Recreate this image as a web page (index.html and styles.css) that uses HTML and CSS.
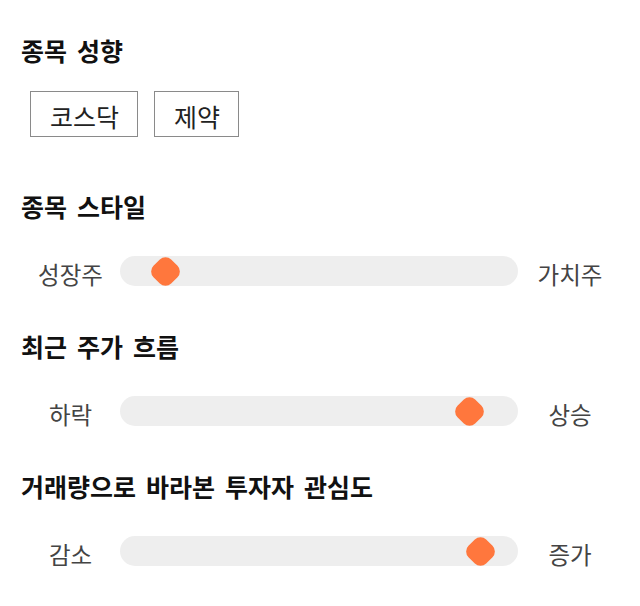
FILE: index.html
```html
<!DOCTYPE html>
<html lang="ko">
<head>
<meta charset="utf-8">
<link rel="stylesheet" href="styles.css">
</head>
<body>
<div class="page">
  <section class="section first">
    <h2 class="title">종목 성향</h2>
    <div class="tags">
      <span class="tag">코스닥</span>
      <span class="tag">제약</span>
    </div>
  </section>
  <section class="section after-tags">
    <h2 class="title">종목 스타일</h2>
    <div class="row">
      <span class="label">성장주</span>
      <div class="track"><span class="thumb" style="left: 45px"></span></div>
      <span class="label">가치주</span>
    </div>
  </section>
  <section class="section">
    <h2 class="title">최근 주가 흐름</h2>
    <div class="row">
      <span class="label">하락</span>
      <div class="track"><span class="thumb" style="left: 349px"></span></div>
      <span class="label">상승</span>
    </div>
  </section>
  <section class="section">
    <h2 class="title">거래량으로 바라본 투자자 관심도</h2>
    <div class="row">
      <span class="label">감소</span>
      <div class="track"><span class="thumb" style="left: 360px"></span></div>
      <span class="label">증가</span>
    </div>
  </section>
</div>
</body>
</html>
```
FILE: styles.css
```css
html, body {
  margin: 0;
  padding: 0;
  background: #ffffff;
}
body {
  font-family: "Noto Sans CJK KR", "Noto Sans", sans-serif;
  color: #111;
}
.page {
  padding: 33px 21px 20px 21px;
}
.section {
  margin-top: 40px;
}
.section.first {
  margin-top: 0;
}
.section.after-tags {
  margin-top: 52px;
}
.title {
  margin: 0;
  font-size: 25px;
  font-weight: 700;
  line-height: 34px;
  word-spacing: 3px;
  color: #111;
}
.tags {
  display: flex;
  gap: 16px;
  margin: 24px 0 0 9px;
}
.tag {
  box-sizing: border-box;
  height: 46px;
  display: flex;
  align-items: center;
  padding: 4px 18px 0 19px;
  border: 1px solid #8a8a8a;
  font-size: 25px;
  line-height: 1;
  color: #222;
}
.row {
  display: grid;
  grid-template-columns: 99px 398px 104px;
  align-items: center;
  margin-top: 30px;
}
.label {
  text-align: center;
  font-size: 23.5px;
  line-height: 30px;
  color: #444;
  padding-top: 6px;
}
.track {
  position: relative;
  height: 30px;
  background: #eeeeee;
  border-radius: 15px;
}
.thumb {
  position: absolute;
  top: 50%;
  width: 25px;
  height: 25px;
  margin-left: -12.5px;
  margin-top: -12.5px;
  background: #ff773d;
  border-radius: 8px;
  transform: rotate(45deg);
}
```
